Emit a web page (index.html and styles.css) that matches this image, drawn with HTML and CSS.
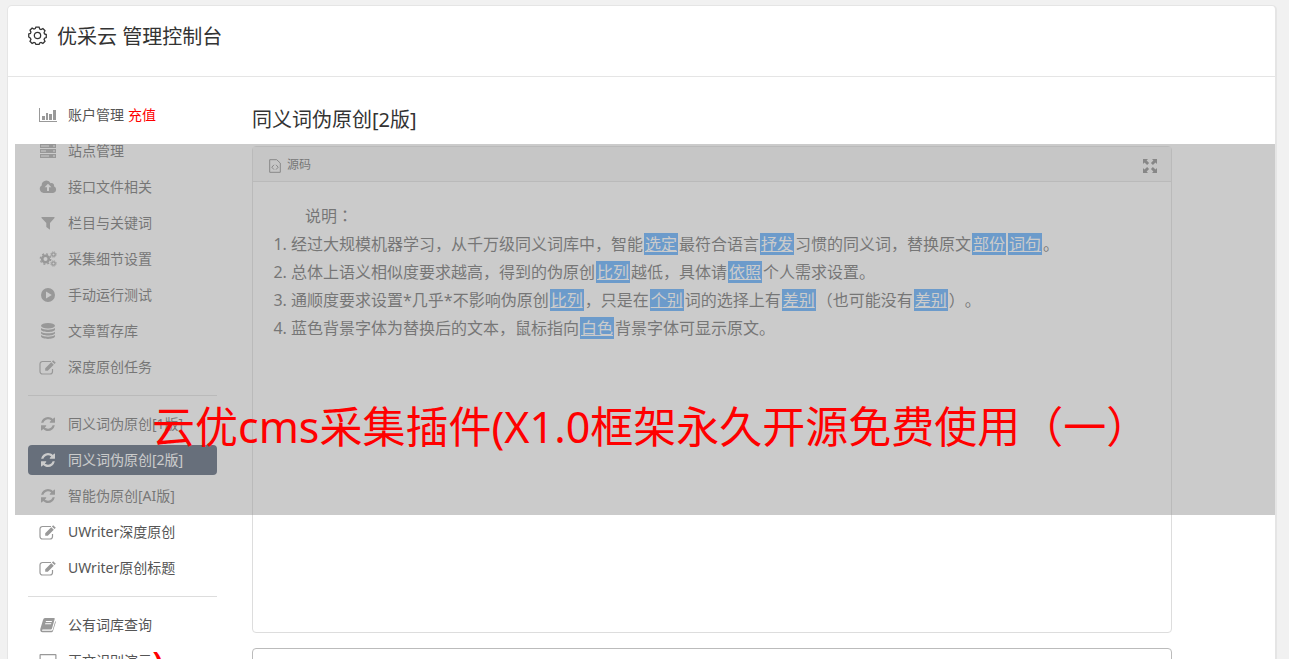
FILE: index.html
```html
<!DOCTYPE html>
<html lang="zh-CN">
<head>
  <meta charset="UTF-8">
  <meta name="viewport" content="width=device-width, initial-scale=1.0">
  <title>优采云 管理控制台</title>
  <link rel="stylesheet" href="styles.css">
</head>
<body>
  <!-- Shared icons -->
  <svg class="sprite" aria-hidden="true">
    <symbol id="i-refresh" viewBox="0 0 1536 1536">
      <path d="M1511 928q0 5-1 7-64 268-268 434.5T764 1536q-146 0-282.5-55T238 1324l-129 129q-19 19-45 19t-45-19-19-45V960q0-26 19-45t45-19h448q26 0 45 19t19 45-19 45l-137 137q71 66 161 102t187 36q134 0 250-65t186-179q11-17 53-117 8-23 30-23h192q13 0 22.5 9.5t9.5 22.5zm25-800v448q0 26-19 45t-45 19h-448q-26 0-45-19t-19-45 19-45l138-138Q969 256 768 256q-134 0-250 65T332 500q-11 17-53 117-8 23-30 23H50q-13 0-22.5-9.5T18 608v-7q65-268 270-434.5T768 0q146 0 284 55.5T1297 212l130-129q19-19 45-19t45 19 19 45z"/>
    </symbol>
    <symbol id="i-edit" viewBox="0 0 18 16">
      <path d="M12 2.500H3.500a2.500 2.500 0 0 0-2.500 2.500v7.500a2.500 2.500 0 0 0 2.500 2.500h7.500a2.500 2.500 0 0 0 2.500-2.500v-2.500" fill="none" stroke="currentColor" stroke-width="1.200"/>
      <path d="M14.200 1.200l2.600 2.600-1.300 1.300-2.600-2.600zM12.200 3.200l2.600 2.600-6 6H6.200V9.200z"/>
    </symbol>
  </svg>

  <div class="console">
    <header class="console-header">
      <svg class="gear" viewBox="0 0 18 18" aria-hidden="true">
        <path d="M7.500 1h3l.6 1.900 1.200.5 1.800-.9 2 2-.9 1.800.5 1.200 1.600.6v2.800l-1.600.6-.5 1.200.9 1.800-2 2-1.800-.9-1.200.5-.6 1.400h-3l-.6-1.400-1.200-.5-1.800.9-2-2 .9-1.800-.5-1.200L.7 10.400V7.600L2.300 7l.5-1.200L1.900 4l2-2 1.800.9 1.200-.5z"/>
        <circle cx="9" cy="9" r="3"/>
      </svg>
      <h1>优采云 管理控制台</h1>
    </header>

    <div class="console-body">
      <nav class="sidebar">
        <ul>
          <li>
            <a href="#">
              <svg viewBox="0 0 20 16"><path d="M1 1h1v13h17v1H1zM4 9h3v4H4zM8 6h2v7H8zM11 7h3v6h-3zM15 3h3v10h-3z"/></svg>
              账户管理
            </a>
            <a class="recharge" href="#">充值</a>
          </li>
          <li><a href="#"><svg viewBox="0 0 18 16"><path fill-rule="evenodd" d="M1 1h16v4H1zM2 2.500v1h8v-1zM14 2.500v1h2v-1zM1 6h16v4H1zM2 7.500v1h5v-1zM14 7.500v1h2v-1zM1 11h16v4H1zM2 12.500v1h8v-1zM14 12.500v1h2v-1z"/></svg>站点管理</a></li>
          <li><a href="#"><svg viewBox="0 0 18 16"><path fill-rule="evenodd" d="M4.500 14A4 4 0 0 1 2.700 6.600 4.700 4.700 0 0 1 11.600 4.200 2.500 2.500 0 0 1 15 7.300 3.500 3.500 0 0 1 14.200 14zM9 4.800L5.600 8.300H8V12h2V8.300h2.400z"/></svg>接口文件相关</a></li>
          <li><a href="#"><svg viewBox="0 0 18 16"><path d="M2.500 2h13v1L11 8v6.800L7.300 12V8l-4.800-5z"/></svg>栏目与关键词</a></li>
          <li><a href="#"><svg viewBox="0 0 18 16">
            <g fill="none" stroke="currentColor">
              <circle cx="6.500" cy="8" r="3.300" stroke-width="2.600"/>
              <circle cx="6.500" cy="8" r="5.200" stroke-width="1.400" stroke-dasharray="2 2.080"/>
              <circle cx="14.500" cy="3.500" r="1.700" stroke-width="1.300"/>
              <circle cx="14.500" cy="3.500" r="2.700" stroke-width="1" stroke-dasharray="1.100 1.020"/>
              <circle cx="14.500" cy="12.500" r="1.700" stroke-width="1.300"/>
              <circle cx="14.500" cy="12.500" r="2.700" stroke-width="1" stroke-dasharray="1.100 1.020"/>
            </g>
          </svg>采集细节设置</a></li>
          <li><a href="#"><svg viewBox="0 0 18 16"><path fill-rule="evenodd" d="M9 1a7 7 0 1 1 0 14A7 7 0 0 1 9 1zM7 4.500v7L12.800 8z"/></svg>手动运行测试</a></li>
          <li><a href="#"><svg viewBox="0 0 18 16"><ellipse cx="9" cy="2.800" rx="7" ry="2.800"/><path d="M2 5c2.500 2.200 11.500 2.200 14 0v1.800c-1 3-13 3-14 0zM2 8.700c2.500 2.200 11.500 2.200 14 0v1.500c-1 3-13 3-14 0zM2 12.100c2.500 2.200 11.500 2.200 14 0v1.500c-1 3.200-13 3.200-14 0z"/></svg>文章暂存库</a></li>
          <li><a href="#"><svg><use href="#i-edit"/></svg>深度原创任务</a></li>
        </ul>
        <ul>
          <li><a href="#"><svg class="small"><use href="#i-refresh"/></svg>同义词伪原创[1版]</a></li>
          <li class="active"><a href="#"><svg class="small"><use href="#i-refresh"/></svg>同义词伪原创[2版]</a></li>
          <li><a href="#"><svg class="small"><use href="#i-refresh"/></svg>智能伪原创[AI版]</a></li>
          <li><a href="#"><svg><use href="#i-edit"/></svg>UWriter深度原创</a></li>
          <li><a href="#"><svg><use href="#i-edit"/></svg>UWriter原创标题</a></li>
        </ul>
        <ul>
          <li><a href="#"><svg viewBox="0 0 18 16"><path fill-rule="evenodd" d="M6 1h9q1 0 .7 1L13 11.500q-.3 1-1.300 1H4q-1.200 0-1 .7t1 .6h8.600q.8 0 1.100-.8L16.300 4q.7.400.4 1.400L14 14q-.4 1.200-1.500 1.200H3.500Q.8 15 1.300 12L4 3q.5-2 2-2zM7 4l-.3 1h6l.3-1zM6.300 6.300l-.3 1h6l.3-1z"/></svg>公有词库查询</a></li>
          <li><a href="#"><svg viewBox="0 0 18 16"><path fill-rule="evenodd" d="M1.500 1h15q1 0 1 1v9q0 1-1 1H11v2h2v1H5v-1h2v-2H1.500q-1 0-1-1V2q0-1 1-1zM1.700 2.200v8.600h14.600V2.200z"/></svg>正文识别演示</a></li>
        </ul>
      </nav>

      <main class="content">
        <h2>同义词伪原创[2版]</h2>

        <section class="editor">
          <div class="editor-toolbar">
            <button type="button" class="source">
              <svg viewBox="0 0 12 14" aria-hidden="true"><path d="M.7.700h7l3.600 3.400v9.200H.7zM5 5.800L2.800 8.200 5 10.600M7 5.800l2.200 2.400L7 10.600"/></svg>
              源码
            </button>
            <button type="button" class="fullscreen" aria-label="全屏">
              <svg viewBox="0 0 14 14"><path d="M0 0h5L3.600 1.500l2.500 2.600-2 2-2.600-2.500L0 5zM14 0v5l-1.500-1.400-2.600 2.500-2-2 2.500-2.600L9 0zM0 14V9l1.500 1.400 2.600-2.500 2 2-2.500 2.600L5 14zM14 14H9l1.400-1.500-2.500-2.600 2-2 2.600 2.500L14 9z"/></svg>
            </button>
          </div>
          <div class="editor-text">
            <p>说明<span class="wide" lang="zh-TW">：</span></p>
            <ol>
              <li>经过大规模机器学习，从千万级同义词库中，智能<a href="#">选定</a>最符合语言<a href="#">抒发</a>习惯的同义词，替换原文<a href="#">部份</a><a href="#">词句</a>。</li>
              <li>总体上语义相似度要求越高，得到的伪原创<a href="#">比列</a>越低，具体请<a href="#">依照</a>个人需求设置。</li>
              <li>通顺度要求设置*几乎*不影响伪原创<a href="#">比列</a>，只是在<a href="#">个别</a>词的选择上有<a href="#">差别</a><span class="wide" lang="zh-TW">（</span>也可能没有<a href="#">差别</a><span class="wide" lang="zh-TW">）</span>。</li>
              <li>蓝色背景字体为替换后的文本，鼠标指向<a href="#">白色</a>背景字体可显示原文。</li>
            </ol>
          </div>
        </section>

        <textarea class="result" aria-label="原文"></textarea>
      </main>
    </div>
  </div>

  <!-- Caption banner over the page -->
  <div class="banner">
    <p>云优cms采集插件(X1.0框架永久开源免费使用<span class="wide" lang="zh-TW">（</span>一<span class="wide" lang="zh-TW">）</span><br>)</p>
  </div>
</body>
</html>
```
FILE: styles.css
```css
* {
  box-sizing: border-box;
}

body {
  margin: 0;
  height: 100vh;
  overflow: hidden;
  position: relative;
  background: #f1f1f1;
  color: #555;
  font-family: "Noto Sans", "Noto Sans CJK SC", sans-serif;
  font-size: 14px;
  text-spacing-trim: space-all;
}

h1, h2, p, ul, ol {
  margin: 0;
  padding: 0;
}

h1, h2 {
  color: #333;
  font-size: 20px;
  font-weight: 400;
  line-height: 28px;
}

a {
  color: inherit;
  text-decoration: none;
}

button {
  padding: 0;
  border: 0;
  background: none;
  color: inherit;
  font: inherit;
  cursor: pointer;
}

svg {
  fill: currentColor;
}

.sprite {
  display: none;
}

/* Punctuation centred in its full-width cell */
.wide {
  font-family: "Noto Sans CJK TC", sans-serif;
  line-height: 1;
}

.console {
  margin: 5px 12px 0 7px;
  background: #fff;
  border: 1px solid #e5e5e5;
  border-right-width: 2px;
  border-radius: 5px;
}

.console-header {
  display: flex;
  align-items: center;
  gap: 10px;
  height: 71px;
  padding: 0 20px 8px;
  border-bottom: 1px solid #e5e5e5;
}

.gear {
  width: 19px;
  height: 19px;
  margin-bottom: 3px;
  fill: none;
  stroke: #333;
  stroke-width: 1.2;
}

.console-body {
  display: flex;
  gap: 35px;
  padding: 23px 103px 20px 20px;
}

/* Sidebar */
.sidebar {
  flex: 0 0 189px;
}

.sidebar ul {
  display: flex;
  flex-direction: column;
  gap: 6px;
  list-style: none;
}

.sidebar ul + ul {
  margin-top: 13px;
  padding-top: 13px;
  border-top: 1px solid #ddd;
}

.sidebar li {
  display: flex;
  align-items: center;
  gap: 4px;
  height: 30px;
  padding: 0 10px 2px;
  border-radius: 4px;
}

.sidebar a {
  display: flex;
  align-items: center;
  gap: 10px;
}

.sidebar svg {
  width: 20px;
  height: 16px;
  margin-top: 2px;
  color: #999;
}

.sidebar svg.small {
  height: 14px;
}

.sidebar .recharge {
  color: #f00;
}

.sidebar .active {
  background: #36475f;
}

.sidebar .active,
.sidebar .active svg {
  color: #fff;
}

/* Editor */
.content {
  flex: 1;
  padding-top: 6px;
}

.editor {
  min-height: 487px;
  margin-top: 12px;
  border: 1px solid #ddd;
  border-radius: 4px;
}

.editor-toolbar {
  display: flex;
  align-items: center;
  justify-content: space-between;
  height: 35px;
  padding: 0 14px 0 16px;
  background: #f5f5f5;
  border-bottom: 1px solid #ddd;
  font-size: 12px;
}

.source {
  display: flex;
  align-items: center;
  gap: 6px;
}

.source svg {
  width: 12px;
  height: 14px;
  margin-top: 3px;
  fill: none;
  stroke: #777;
}

.fullscreen svg {
  display: block;
  width: 14px;
  height: 14px;
  margin-top: 4px;
  color: #777;
}

.editor-text {
  padding: 20px;
  font-size: 16px;
  line-height: 28px;
}

.editor-text p {
  padding-left: 32px;
}

.editor-text ol {
  padding-left: 18px;
}

.editor-text a {
  margin: 0 1px;
  padding: 0 1px;
  background: #409eff;
  color: #fff;
  text-decoration: underline;
}

.result {
  display: block;
  width: 100%;
  height: 120px;
  margin-top: 15px;
  border: 1px solid #bbb;
  border-radius: 4px;
  resize: none;
}

/* Banner */
.banner {
  position: absolute;
  top: 144px;
  left: 15px;
  right: 14px;
  height: 371px;
  padding: 163px 0 0 137px;
  background: rgba(151, 151, 151, 0.5);
  color: #f00;
  font-size: 43px;
  line-height: 240px;
  white-space: nowrap;
}
```
